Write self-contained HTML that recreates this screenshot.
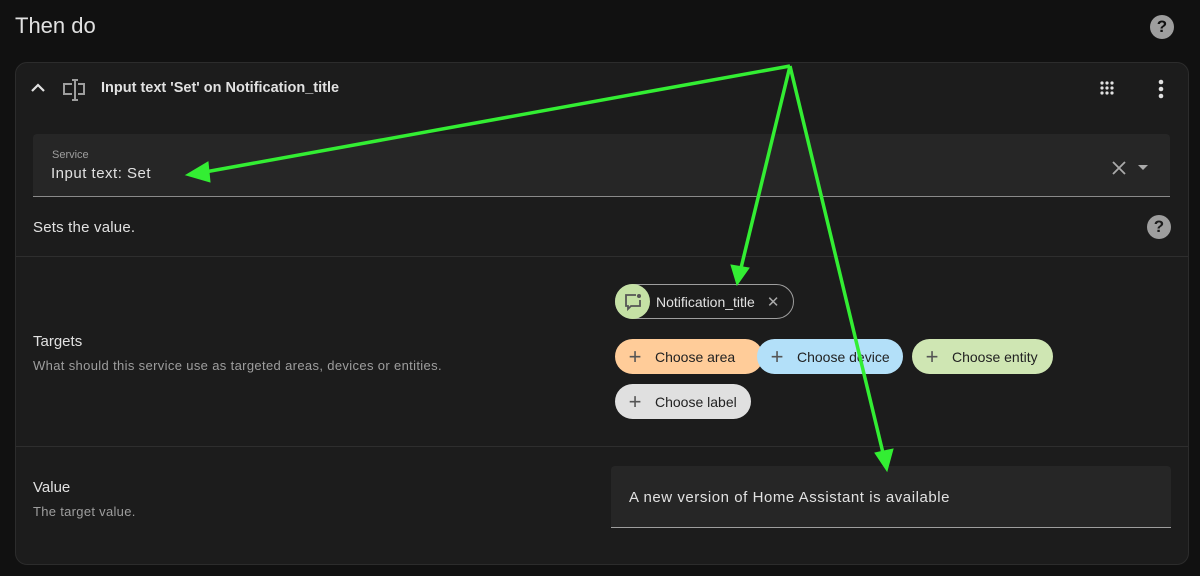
<!DOCTYPE html>
<html><head><meta charset="utf-8"><style>
*{box-sizing:border-box;margin:0;padding:0}
body{width:1200px;height:576px;background:#111;font-family:"Liberation Sans",sans-serif;color:#e1e1e1;position:relative;overflow:hidden}
.abs{position:absolute}
.card{left:15px;top:62px;width:1174px;height:503px;background:#1c1c1c;border:1px solid #2c2c2c;border-radius:12px}
.chip{position:absolute;height:35px;border-radius:18px;font-size:14px;color:#222;display:flex;align-items:center}
.chip .p{font-size:22px;color:#555;width:40px;text-align:center;font-weight:300}
.q{width:24px;height:24px;border-radius:50%;background:#9e9e9e;color:#1c1c1c;font-weight:bold;font-size:17px;text-align:center;line-height:24px}
</style></head><body>
<div class="abs" style="left:15px;top:13px;font-size:22px;color:#e1e1e1">Then do</div>
<div class="abs q" style="left:1150px;top:15px;background:#9e9e9e;color:#111">?</div>
<div class="abs card"></div>
<svg class="abs" style="left:30px;top:80px" width="16" height="16"><path d="M2 11 L8 5 L14 11" stroke="#e1e1e1" stroke-width="2.2" fill="none"/></svg>
<svg class="abs" style="left:62px;top:78px" width="24" height="24" fill="none" stroke="#9e9e9e" stroke-width="2"><path d="M10 6H2V16H10M16 6H22V16H16M13 2V22M10 2H16M10 22H16"/></svg>
<div class="abs" style="left:101px;top:80px;font-size:14.5px;font-weight:bold;color:#e1e1e1">Input text 'Set' on Notification_title</div>
<svg class="abs" style="left:1100px;top:81px" width="14" height="16" fill="#e1e1e1"><g><circle cx="2" cy="2" r="1.6"/><circle cx="7" cy="2" r="1.6"/><circle cx="12" cy="2" r="1.6"/><circle cx="2" cy="7" r="1.6"/><circle cx="7" cy="7" r="1.6"/><circle cx="12" cy="7" r="1.6"/><circle cx="2" cy="12" r="1.6"/><circle cx="7" cy="12" r="1.6"/><circle cx="12" cy="12" r="1.6"/></g></svg>
<svg class="abs" style="left:1156px;top:79px" width="10" height="20" fill="#e1e1e1"><circle cx="5" cy="3" r="2.3"/><circle cx="5" cy="10" r="2.3"/><circle cx="5" cy="17" r="2.3"/></svg>
<div class="abs" style="left:33px;top:134px;width:1137px;height:63px;background:#262626;border-radius:4px 4px 0 0;border-bottom:1px solid #8a8a8a"></div>
<div class="abs" style="left:52px;top:149px;font-size:11px;color:#9e9e9e">Service</div>
<div class="abs" style="left:51px;top:165px;font-size:15px;color:#e1e1e1;letter-spacing:.5px">Input text: Set</div>
<svg class="abs" style="left:1111px;top:160px" width="16" height="16" stroke="#aaa" stroke-width="1.8"><path d="M2 2L14 14M14 2L2 14"/></svg>
<svg class="abs" style="left:1137px;top:164px" width="12" height="8" fill="#aaa"><path d="M1 1H11L6 6Z"/></svg>
<div class="abs" style="left:33px;top:219px;font-size:15px;color:#e1e1e1;letter-spacing:.2px">Sets the value.</div>
<div class="abs q" style="left:1147px;top:215px">?</div>
<div class="abs" style="left:16px;top:256px;width:1172px;height:1px;background:#2e2e2e"></div>
<div class="abs" style="left:33px;top:333px;font-size:15px;color:#e1e1e1">Targets</div>
<div class="abs" style="left:33px;top:358px;font-size:13px;color:#9e9e9e;letter-spacing:.35px">What should this service use as targeted areas, devices or entities.</div>
<div class="chip" style="left:615px;top:284px;width:179px;border:1px solid #9e9e9e;color:#e1e1e1;background:#1c1c1c">
<div style="width:35px;height:35px;margin-left:-1px;border-radius:50%;background:#c5e1a5;display:flex;align-items:center;justify-content:center"><svg width="20" height="20" fill="none" stroke="#555" stroke-width="1.8"><path d="M13 3H3V14H5V17L8 14H17V8"/><circle cx="16" cy="4" r="2" fill="#555" stroke="none"/></svg></div>
<span style="margin-left:6px">Notification_title</span><span style="margin-left:12px;color:#aaa;font-size:15px">✕</span></div>
<div class="chip" style="left:615px;top:339px;width:148px;background:#ffcc99"><span class="p">+</span><span>Choose area</span></div>
<div class="chip" style="left:757px;top:339px;width:146px;background:#b3e0f9"><span class="p">+</span><span>Choose device</span></div>
<div class="chip" style="left:912px;top:339px;width:141px;background:#cfe6b3"><span class="p">+</span><span>Choose entity</span></div>
<div class="chip" style="left:615px;top:384px;width:136px;background:#e0e0e0"><span class="p">+</span><span>Choose label</span></div>
<div class="abs" style="left:16px;top:446px;width:1172px;height:1px;background:#2e2e2e"></div>
<div class="abs" style="left:33px;top:479px;font-size:15px;color:#e1e1e1">Value</div>
<div class="abs" style="left:33px;top:504px;font-size:13px;color:#9e9e9e;letter-spacing:.3px">The target value.</div>
<div class="abs" style="left:611px;top:466px;width:560px;height:62px;background:#262626;border-radius:4px 4px 0 0;border-bottom:1px solid #9e9e9e"></div>
<div class="abs" style="left:629px;top:489px;font-size:15px;color:#e1e1e1;letter-spacing:.55px">A new version of Home Assistant is available</div>
<svg class="abs" style="left:0;top:0" width="1200" height="576">
<g stroke="#33ee33" stroke-width="3.5" fill="#33ee33">
<line x1="790" y1="66" x2="205" y2="172"/>
<polygon points="186,175 208,162 210,182" stroke-width="1"/>
<line x1="790" y1="66" x2="741" y2="268"/>
<polygon points="737,285 731,265 749,268" stroke-width="1"/>
<line x1="790" y1="66" x2="883" y2="453"/>
<polygon points="887,471 875,453 893,449" stroke-width="1"/>
</g></svg>
</body></html>
